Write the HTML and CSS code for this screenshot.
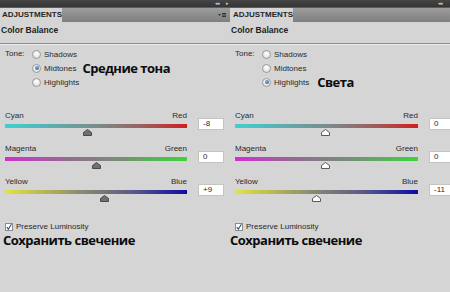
FILE: index.html
```html
<html lang="ru">
<head>
    <meta charset="UTF-8">
    <title>Color Balance</title>
    <link rel="stylesheet" href="styles.css">
</head>
<body>
    <div class="screen">
        <!-- Midtones panel -->
        <section class="panel">
            <div class="topbar">
                <span class="arrows">&#9666;&#9666;</span>
                <span class="arrows single">&#9656;</span>
            </div>
            <div class="tabs">
                <div class="tab">ADJUSTMENTS</div>
                <svg class="menu" width="8" height="6" viewBox="0 0 8 6">
                    <path d="M0 2 L3 2 L1.5 4Z" fill="#333"/>
                    <path d="M4 1.5 H8 M4 3 H8 M4 4.5 H8" stroke="#333" stroke-width="1"/>
                </svg>
            </div>
            <div class="body">
                <div class="title">Color Balance</div>
                <div class="rule"></div>
                <div class="tone">
                    <span class="tone-label">Tone:</span>
                    <div class="radios">
                        <div class="radio"><i class="circle"></i>Shadows</div>
                        <div class="radio"><i class="circle on"></i>Midtones<b class="note mid">Средние тона</b></div>
                        <div class="radio"><i class="circle"></i>Highlights</div>
                    </div>
                </div>

                <div class="sliders">
                    <div class="slider">
                        <div class="track">
                            <div class="ends"><span>Cyan</span><span>Red</span></div>
                            <div class="bar cyan-red"></div>
                            <svg class="thumb dark" style="left: 45.6%" width="9" height="7" viewBox="0 0 9 7"><path d="M4.5 0.5 L8.5 3.5 V6.5 H0.5 V3.5Z"/></svg>
                        </div>
                        <div class="value">-8</div>
                    </div>
                    <div class="slider">
                        <div class="track">
                            <div class="ends"><span>Magenta</span><span>Green</span></div>
                            <div class="bar magenta-green"></div>
                            <svg class="thumb dark" style="left: 50.5%" width="9" height="7" viewBox="0 0 9 7"><path d="M4.5 0.5 L8.5 3.5 V6.5 H0.5 V3.5Z"/></svg>
                        </div>
                        <div class="value">0</div>
                    </div>
                    <div class="slider">
                        <div class="track">
                            <div class="ends"><span>Yellow</span><span>Blue</span></div>
                            <div class="bar yellow-blue"></div>
                            <svg class="thumb dark" style="left: 54.4%" width="9" height="7" viewBox="0 0 9 7"><path d="M4.5 0.5 L8.5 3.5 V6.5 H0.5 V3.5Z"/></svg>
                        </div>
                        <div class="value">+9</div>
                    </div>
                </div>

                <div class="preserve">
                    <svg class="check" width="8" height="8" viewBox="0 0 8 8">
                        <rect x="0.5" y="0.5" width="7" height="7" fill="#fff" stroke="#8c8c8c"/>
                        <path d="M1.8 4 L3.3 6.2 L6.4 1.2" fill="none" stroke="#2c4a6e" stroke-width="1.1"/>
                    </svg>
                    Preserve Luminosity
                </div>
                <div class="note big">Сохранить свечение</div>
            </div>
        </section>

        <!-- Highlights panel -->
        <section class="panel right">
            <div class="topbar">
                <span class="arrows">&#9666;&#9666;</span>
            </div>
            <div class="tabs">
                <div class="tab">ADJUSTMENTS</div>
            </div>
            <div class="body">
                <div class="title">Color Balance</div>
                <div class="rule"></div>
                <div class="tone">
                    <span class="tone-label">Tone:</span>
                    <div class="radios">
                        <div class="radio"><i class="circle"></i>Shadows</div>
                        <div class="radio"><i class="circle"></i>Midtones</div>
                        <div class="radio"><i class="circle on"></i>Highlights<b class="note high">Света</b></div>
                    </div>
                </div>

                <div class="sliders">
                    <div class="slider">
                        <div class="track">
                            <div class="ends"><span>Cyan</span><span>Red</span></div>
                            <div class="bar cyan-red"></div>
                            <svg class="thumb" style="left: 49.7%" width="9" height="7" viewBox="0 0 9 7"><path d="M4.5 0.5 L8.5 3.5 V6.5 H0.5 V3.5Z"/></svg>
                        </div>
                        <div class="value">0</div>
                    </div>
                    <div class="slider">
                        <div class="track">
                            <div class="ends"><span>Magenta</span><span>Green</span></div>
                            <div class="bar magenta-green"></div>
                            <svg class="thumb" style="left: 49.2%" width="9" height="7" viewBox="0 0 9 7"><path d="M4.5 0.5 L8.5 3.5 V6.5 H0.5 V3.5Z"/></svg>
                        </div>
                        <div class="value">0</div>
                    </div>
                    <div class="slider">
                        <div class="track">
                            <div class="ends"><span>Yellow</span><span>Blue</span></div>
                            <div class="bar yellow-blue"></div>
                            <svg class="thumb" style="left: 44.3%" width="9" height="7" viewBox="0 0 9 7"><path d="M4.5 0.5 L8.5 3.5 V6.5 H0.5 V3.5Z"/></svg>
                        </div>
                        <div class="value">-11</div>
                    </div>
                </div>

                <div class="preserve">
                    <svg class="check" width="8" height="8" viewBox="0 0 8 8">
                        <rect x="0.5" y="0.5" width="7" height="7" fill="#fff" stroke="#8c8c8c"/>
                        <path d="M1.8 4 L3.3 6.2 L6.4 1.2" fill="none" stroke="#2c4a6e" stroke-width="1.1"/>
                    </svg>
                    Preserve Luminosity
                </div>
                <div class="note big">Сохранить свечение</div>
            </div>
        </section>
    </div>
</body>
</html>
```
FILE: styles.css
```css
body {
    margin: 0;
    background-color: #d5d5d5;
    font-family: 'Liberation Sans', Arial, sans-serif;
    color: #2a2a2a;
}

.screen {
    display: flex;
    width: 450px;
    height: 292px;
    overflow: hidden;
}

.panel {
    width: 229px;
    flex: none;
    background-color: #d5d5d5;
}

.panel.right {
    width: 221px;
    overflow: hidden;
}

/* dark title strip with collapse arrows */
.topbar {
    height: 7px;
    background: linear-gradient(#454545, #353535);
    display: flex;
    justify-content: flex-end;
    align-items: center;
    gap: 4px;
    padding-right: 8px;
}

.panel:first-child .topbar {
    padding-right: 1px;
}

.arrows {
    font-size: 5px;
    line-height: 7px;
    color: #cfcfcf;
    letter-spacing: -1px;
}

.arrows.single {
    margin-left: 3px;
}

.tabs {
    height: 15px;
    background: linear-gradient(#9d9d9d, #7f7f7f);
    border-top: 1px solid #5c5c5c;
    box-sizing: border-box;
    display: flex;
    align-items: flex-end;
    justify-content: space-between;
}

.tab {
    height: 14px;
    width: 62px;
    background-color: #d5d5d5;
    font-size: 8px;
    font-weight: bold;
    line-height: 14px;
    padding-left: 2px;
    color: #262626;
    box-sizing: border-box;
    white-space: nowrap;
}

.panel.right .tab {
    margin-left: 1px;
    padding-left: 3px;
    width: 63px;
}

.menu {
    align-self: center;
    margin-right: 3px;
}

.body {
    padding-left: 1px;
}

.panel.right .body {
    padding-left: 2px;
}

.title {
    font-size: 8.5px;
    font-weight: bold;
    line-height: 14px;
    margin-top: 1px;
    color: #1e1e1e;
}

.rule {
    height: 1px;
    background-color: #8e8e8e;
    border-bottom: 1px solid #ececec;
    margin-top: 6px;
    margin-left: -2px;
}

.tone {
    display: flex;
    margin-top: 2px;
    font-size: 8px;
}

.tone-label {
    width: 31px;
    padding-left: 4px;
    line-height: 14px;
    box-sizing: border-box;
}

.radio {
    display: flex;
    align-items: center;
    height: 14px;
    white-space: nowrap;
}

.circle {
    width: 9px;
    height: 9px;
    border-radius: 50%;
    box-sizing: border-box;
    border: 1px solid #9a9a9a;
    background: radial-gradient(circle at 50% 35%, #ffffff, #d8d8d8);
    margin-right: 3px;
    position: relative;
}

.circle.on::after {
    content: '';
    position: absolute;
    left: 1.5px;
    top: 1.5px;
    width: 4px;
    height: 4px;
    border-radius: 50%;
    background: radial-gradient(circle at 40% 35%, #7fb0de, #1f4f86);
}

/* bold russian captions added over the screenshot */
.note {
    font-family: 'Open Sans', 'Liberation Sans', sans-serif;
    font-weight: bold;
    color: #0c0c0c;
    font-size: 13px;
    letter-spacing: -0.5px;
}

.note.mid {
    margin-left: 6px;
}

.note.high {
    margin-left: 8px;
}

.sliders {
    margin-top: 21px;
}

.slider {
    display: flex;
    height: 33px;
}

.track {
    position: relative;
    flex: none;
    width: 182px;
    margin-left: 4px;
}

.panel.right .track {
    width: 183px;
}

.ends {
    display: flex;
    justify-content: space-between;
    font-size: 8px;
    line-height: 11px;
    height: 11px;
    margin-bottom: 3px;
}

.bar {
    height: 4px;
}

.cyan-red {
    background: linear-gradient(to right, #3fd0d4, #7a8c8c 50%, #9a6060 75%, #d41e1e);
}

.magenta-green {
    background: linear-gradient(to right, #d42ed4, #8f6e8f 35%, #7c8a7c 60%, #3cd43c);
}

.yellow-blue {
    background: linear-gradient(to right, #e4e43a, #8e8e6e 40%, #5a5a88 70%, #0c0ca8);
}

.thumb {
    position: absolute;
    top: 19px;
    margin-left: -4.5px;
}

.thumb path {
    fill: #ffffff;
    stroke: #5a5a5a;
    stroke-width: 1;
}

.thumb.dark path {
    fill: #707070;
    stroke: #4a4a4a;
}

.value {
    width: 26px;
    height: 12px;
    margin-top: 8px;
    margin-left: 11px;
    background-color: #ffffff;
    border: 1px solid #c4c4c4;
    box-sizing: border-box;
    font-size: 8px;
    line-height: 10px;
    padding-left: 4px;
    flex: none;
}

.preserve {
    display: flex;
    align-items: center;
    gap: 3px;
    margin-top: 13px;
    margin-left: 4px;
    font-size: 8px;
    line-height: 10px;
}

.note.big {
    line-height: 16px;
    margin-left: 2px;
}

.panel.right .note.big {
    margin-left: -1px;
}
```
